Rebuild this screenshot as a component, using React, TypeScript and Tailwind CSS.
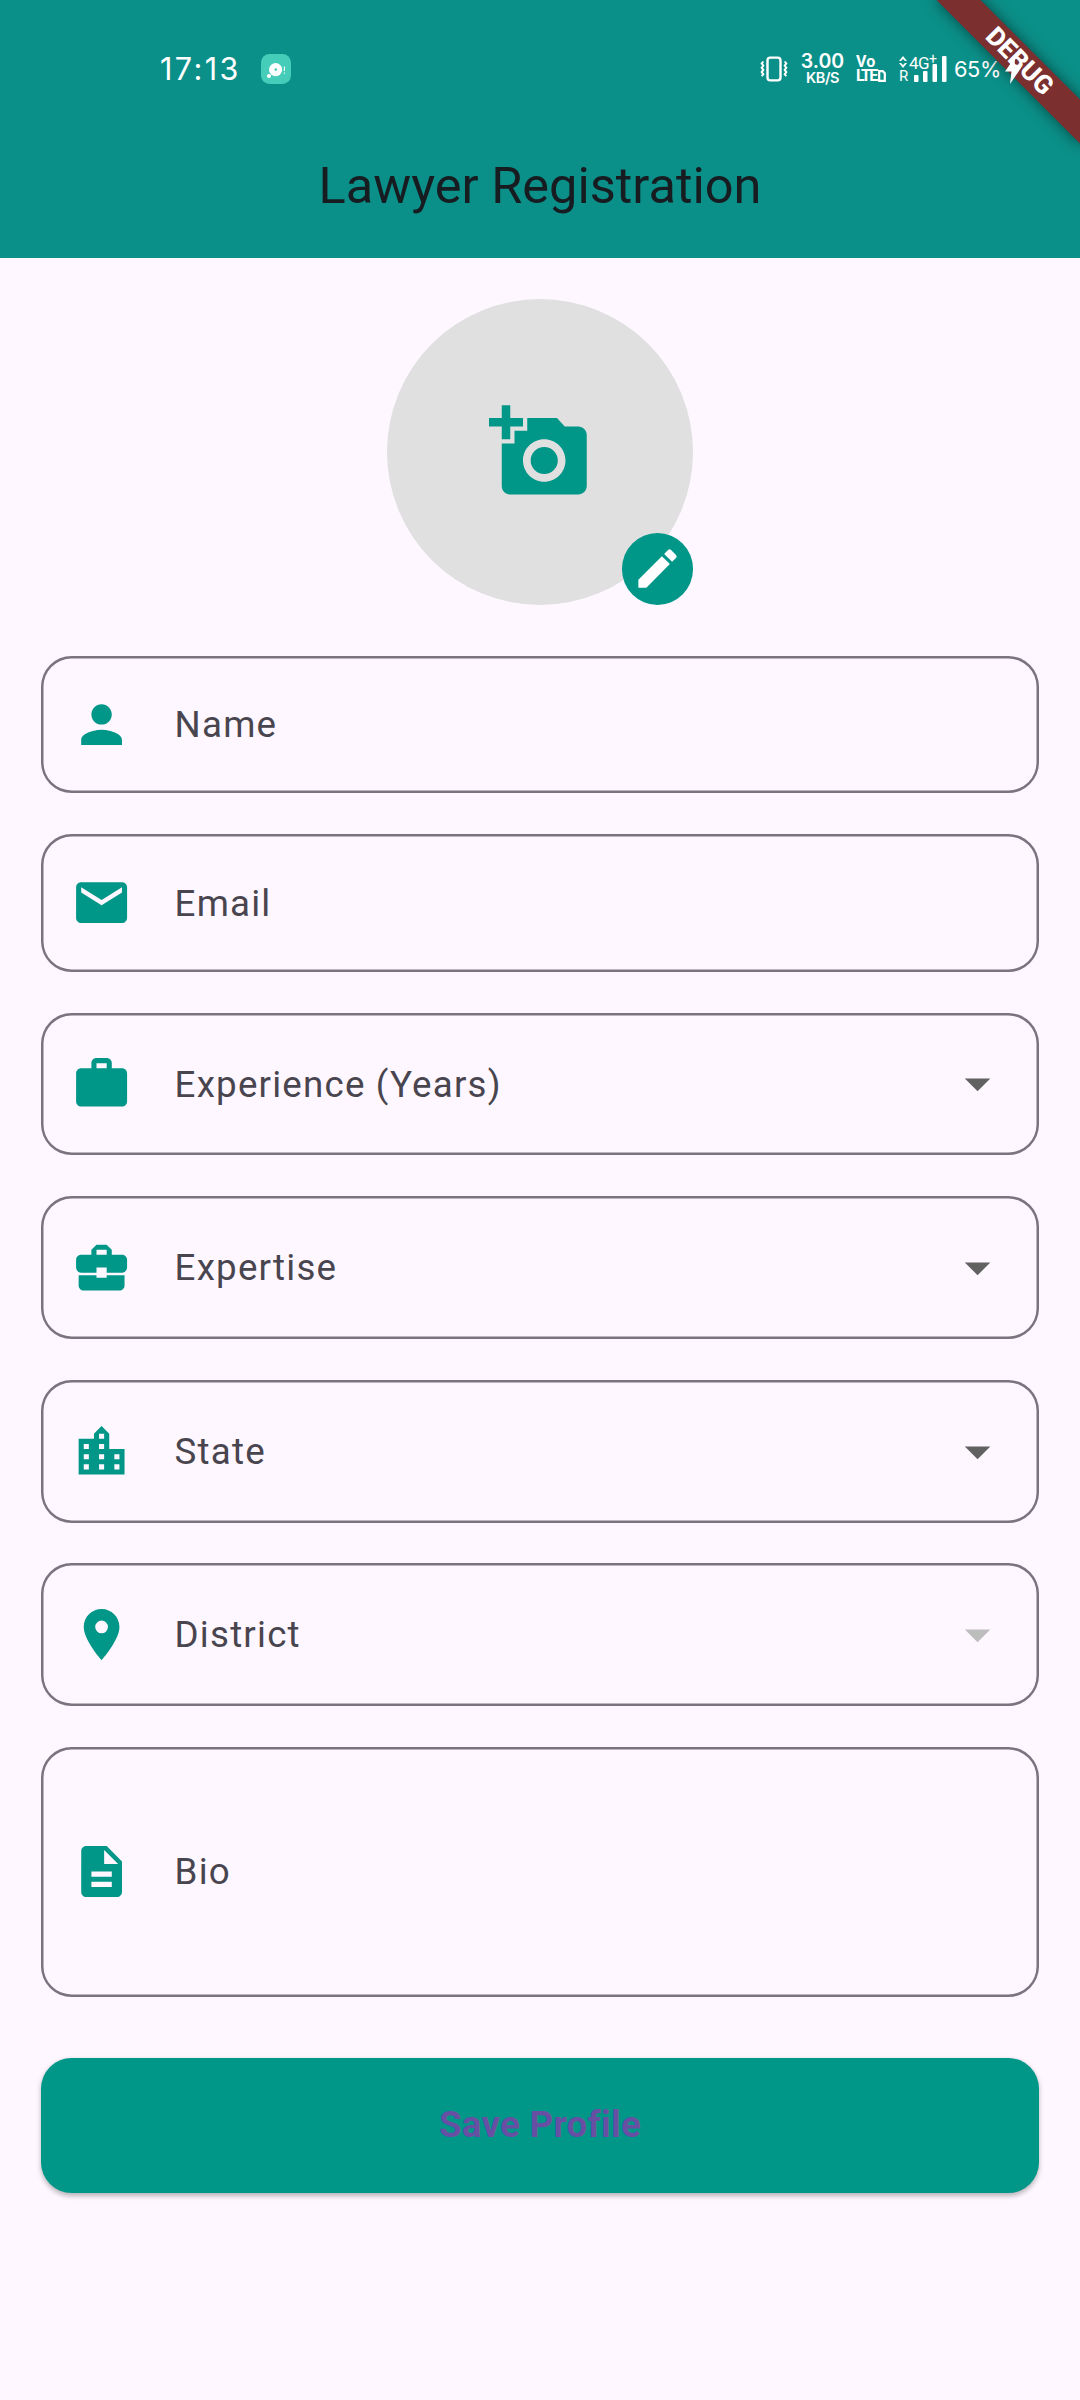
import type { IconType } from "react-icons";
import {
  MdAddAPhoto,
  MdArrowDropDown,
  MdBusinessCenter,
  MdDescription,
  MdEdit,
  MdEmail,
  MdLocationCity,
  MdLocationOn,
  MdPerson,
  MdWork,
} from "react-icons/md";

type FieldProps = {
  icon: IconType;
  label: string;
  size: "text" | "select" | "area";
  disabled?: boolean;
};

const heights = {
  text: "h-[137.7px]",
  select: "h-[142.8px]",
  area: "h-[249.9px]",
};

function Field({ icon: Icon, label, size, disabled }: FieldProps) {
  return (
    <div
      className={`${heights[size]} flex shrink-0 items-center rounded-[30.6px] pr-[30.6px] pl-[30.6px] shadow-[inset_0_0_0_2.5px_#79747e]`}
    >
      <Icon className="size-[61.2px] shrink-0 text-[#009688]" />
      <span className="ml-[42px] flex-1 text-[36.72px] leading-[55px] tracking-[1.2px] text-[#49454f]">
        {label}
      </span>
      {size === "select" && (
        <MdArrowDropDown
          className={`size-[61.2px] shrink-0 ${disabled ? "text-[#bdbdbd]" : "text-[#616161]"}`}
        />
      )}
    </div>
  );
}

function StatusBar() {
  return (
    <div className="flex h-[138px] items-center pl-[160px] font-['Inter'] text-white">
      <span className="w-[101px] text-[30.5px] font-normal tracking-[2.4px]">17:13</span>
      <svg className="size-[30px]" viewBox="0 0 30 30">
        <rect width="30" height="30" rx="8.5" fill="#45cdb9" />
        <circle cx="14.6" cy="15.6" r="6.6" fill="#fff" />
        <circle cx="14.8" cy="15.6" r="1.3" fill="#45cdb9" />
        <circle cx="8" cy="22" r="2.1" fill="#fff" />
        <path d="M23.4 12.5v4.6M23.4 18.4v1.4" stroke="#fff" strokeWidth="1.1" />
      </svg>
      <svg className="ml-[469px] h-[26px] w-[28px]" viewBox="0 0 28 26" fill="none" stroke="#fff">
        <rect x="7.5" y="1.6" width="13" height="22.8" rx="2.8" strokeWidth="2.4" />
        <path
          d="M3.3 5.5l-1.6 2 1.6 2-1.6 2.2 1.6 2.2-1.6 2.2 1.6 2.2-1.6 1.8M24.7 5.5l1.6 2-1.6 2 1.6 2.2-1.6 2.2 1.6 2.2-1.6 2.2 1.6 1.8"
          strokeWidth="2"
        />
      </svg>
      <div className="ml-[13px] flex w-[43px] flex-col items-center font-semibold">
        <span className="text-[19.5px] leading-[17px]">3.00</span>
        <span className="text-[14.5px] leading-[15px] tracking-[-0.4px]">KB/S</span>
      </div>
      <div className="ml-[12px] flex w-[32px] flex-col font-['Roboto'] text-[16px] font-bold">
        <span className="leading-[14px] tracking-[0.2px]">Vo</span>
        <span className="flex items-center leading-[14px] tracking-[-1.8px]">
          LTE
          <svg className="ml-[2px] h-[12px] w-[8px] shrink-0" viewBox="0 0 8 12">
            <path d="M1.2 1.2h3.6l2 2v7.6H1.2z" fill="none" stroke="#fff" strokeWidth="2.2" />
          </svg>
        </span>
      </div>
      <div className="relative ml-[11px] h-[28px] w-[49px] font-['Roboto']">
        <svg className="size-full" viewBox="0 0 49 28" fill="#fff">
          <path d="M4 1l4 5H6L4 4 2 6H0zM4 13l4-5H6L4 10 2 8H0z" />
          <rect x="15" y="20" width="4.5" height="7" rx="1" />
          <rect x="24" y="16" width="4.5" height="11" rx="1" />
          <rect x="33.5" y="9" width="4.5" height="18" rx="1" />
          <rect x="43" y="1" width="4.5" height="26" rx="1" />
        </svg>
        <span className="absolute top-[14px] left-0 text-[15px] leading-[15px]">R</span>
        <span className="absolute top-0 left-[10px] flex text-[17px] leading-[16px] tracking-[-0.6px]">
          4G
          <span className="text-[14px] leading-[9px]">+</span>
        </span>
      </div>
      <span className="ml-[6px] text-[21.8px] tracking-[-0.4px]">65%</span>
    </div>
  );
}

function DebugBanner() {
  return (
    <div className="pointer-events-none absolute top-0 right-0 size-[170px] overflow-hidden">
      <div className="absolute top-[71.4px] left-[69px] flex h-[30.6px] w-[204px] origin-[102px_-71.4px] rotate-45 items-center justify-center bg-[#7b2f2f] font-['Roboto'] text-[26px] leading-none font-extrabold text-white shadow-[0_0_15.3px_rgba(0,0,0,0.5)]">
        DEBUG
      </div>
      <svg className="absolute top-[57px] left-[94px] h-[28px] w-[18px]" viewBox="0 0 18 28">
        <path d="M11 0 1 14.5h6.5L6 27 17 11h-6.5z" fill="#fff" />
      </svg>
    </div>
  );
}

export default function App() {
  return (
    <div className="relative flex h-[2400px] w-[1080px] flex-col overflow-hidden bg-[#fef7ff] font-['Roboto',sans-serif]">
      <header className="h-[257.7px] shrink-0 bg-[#0b9089]">
        <StatusBar />
        <h1 className="pt-[18px] text-center text-[50.5px] leading-[60px] font-normal text-[#171c21]">
          Lawyer Registration
        </h1>
      </header>

      <main className="flex flex-col gap-[40.8px] px-[40.8px] pt-[41px]">
        <div className="relative mb-[10.2px] flex size-[306px] shrink-0 items-center justify-center self-center rounded-full bg-[#e0e0e0]">
          <MdAddAPhoto className="size-[102px] text-[#009688]" />
          <div className="absolute right-0 bottom-0 flex size-[71.4px] items-center justify-center rounded-full bg-[#009688]">
            <MdEdit className="size-[51px] text-white" />
          </div>
        </div>

        <Field icon={MdPerson} label="Name" size="text" />
        <Field icon={MdEmail} label="Email" size="text" />
        <Field icon={MdWork} label="Experience (Years)" size="select" />
        <Field icon={MdBusinessCenter} label="Expertise" size="select" />
        <Field icon={MdLocationCity} label="State" size="select" />
        <Field icon={MdLocationOn} label="District" size="select" disabled />
        <Field icon={MdDescription} label="Bio" size="area" />

        <button className="mt-[20px] h-[135.2px] shrink-0 rounded-[30.6px] bg-[#009688] pb-[2px] text-[36.72px] font-bold tracking-[0.255px] text-[#6750a4] shadow-[0_2.5px_5px_rgba(0,0,0,0.28)]">
          Save Profile
        </button>
      </main>

      <DebugBanner />
    </div>
  );
}
